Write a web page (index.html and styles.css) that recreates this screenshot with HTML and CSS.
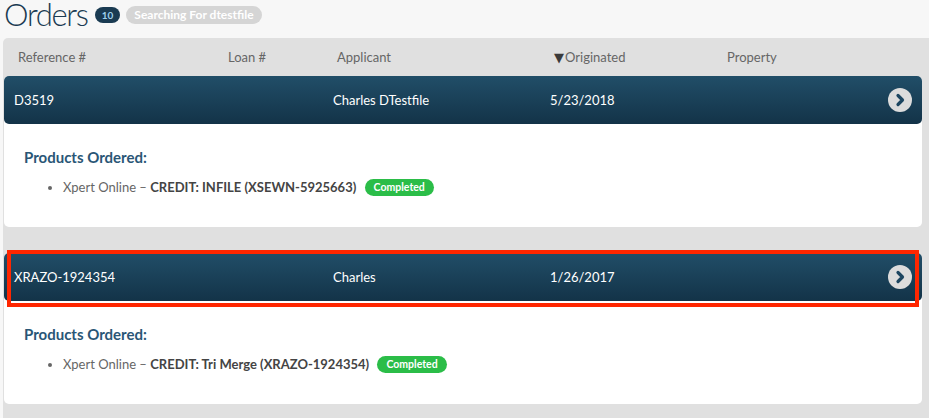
FILE: index.html
```html
<!DOCTYPE html>
<html>
<head>
<meta charset="utf-8">
<link rel="stylesheet" href="styles.css">
</head>
<body>
<div class="page">
  <div class="title-row">
    <h1 class="title">Orders</h1>
    <span class="count">10</span>
    <span class="search-tag">Searching For dtestfile</span>
  </div>
  <div class="table">
    <div class="thead cols">
      <div>Reference #</div>
      <div>Loan #</div>
      <div>Applicant</div>
      <div class="sorted"><span class="tri">&#9660;</span>Originated</div>
      <div>Property</div>
    </div>

    <div class="card">
      <div class="row cols">
        <div>D3519</div>
        <div></div>
        <div>Charles DTestfile</div>
        <div>5/23/2018</div>
        <div class="go-cell"><span class="go"><svg width="24" height="24" viewBox="0 0 24 24"><circle cx="12" cy="12" r="12" fill="#dcdcdc"/><path d="M10 7.5 L14.5 12 L10 16.5" fill="none" stroke="#1c4560" stroke-width="3.2" stroke-linecap="round" stroke-linejoin="round"/></svg></span></div>
      </div>
      <div class="details">
        <h2 class="products">Products Ordered:</h2>
        <ul class="plist">
          <li>Xpert Online – <b>CREDIT: INFILE (XSEWN-5925663)</b> <span class="status">Completed</span></li>
        </ul>
      </div>
    </div>

    <div class="card">
      <div class="row cols">
        <div>XRAZO-1924354</div>
        <div></div>
        <div>Charles</div>
        <div>1/26/2017</div>
        <div class="go-cell"><span class="go"><svg width="24" height="24" viewBox="0 0 24 24"><circle cx="12" cy="12" r="12" fill="#dcdcdc"/><path d="M10 7.5 L14.5 12 L10 16.5" fill="none" stroke="#1c4560" stroke-width="3.2" stroke-linecap="round" stroke-linejoin="round"/></svg></span></div>
        <div class="highlight"></div>
      </div>
      <div class="details">
        <h2 class="products">Products Ordered:</h2>
        <ul class="plist">
          <li>Xpert Online – <b>CREDIT: Tri Merge (XRAZO-1924354)</b> <span class="status">Completed</span></li>
        </ul>
      </div>
    </div>
  </div>
</div>
</body>
</html>
```

FILE: styles.css
```css
html, body {
  margin: 0;
  padding: 0;
  background: #f7f7f7;
  overflow: hidden;
}
body {
  font-family: Lato, "Open Sans", sans-serif;
  font-size: 13px;
  color: #555;
}
.page {
  padding-left: 3px;
}
.title-row {
  display: flex;
  align-items: flex-start;
  height: 38px;
}
.title {
  margin: 0 7px 0 1px;
  font-size: 31px;
  font-weight: 300;
  letter-spacing: -1.3px;
  color: #1a3b52;
  line-height: 29px;
}
.count {
  background: #1a3b52;
  color: #9fd0ec;
  font-weight: 700;
  font-size: 10px;
  border-radius: 9px;
  padding: 0 7px;
  height: 16px;
  line-height: 16px;
  margin-top: 7px;
  margin-right: 6px;
}
.search-tag {
  background: #d5d5d5;
  color: #fff;
  font-weight: 700;
  font-size: 12px;
  border-radius: 9px;
  padding: 0 8px;
  height: 18px;
  line-height: 18px;
  margin-top: 6px;
}
.table {
  background: #e0e0e0;
  border-top-left-radius: 5px;
  padding: 0 7px 15px 1px;
}
.cols {
  display: grid;
  grid-template-columns: 210px 109px 217px 173px 1fr;
  align-items: center;
}
.thead {
  height: 38px;
  padding-left: 14px;
  color: #666;
}
.sorted .tri {
  font-family: "DejaVu Sans", sans-serif;
  font-size: 13px;
  margin-right: 1px;
  color: #3a3a3a;
}
.card {
  background: #fff;
  border-radius: 5px;
  margin-bottom: 26px;
}
.card:last-child {
  margin-bottom: 0;
}
.row {
  position: relative;
  height: 48px;
  padding-left: 10px;
  border-radius: 5px;
  background: linear-gradient(#214e68, #133348);
  color: #fff;
}
.go-cell {
  display: flex;
  justify-content: flex-end;
  padding-right: 10px;
}
.go svg {
  display: block;
}
.highlight {
  position: absolute;
  left: 3px;
  right: 3px;
  top: -3px;
  bottom: -6px;
  border: 4px solid #ff2600;
  pointer-events: none;
}
.details {
  padding: 24px 20px 30px;
}
.products {
  margin: 0;
  font-size: 15px;
  font-weight: 700;
  color: #2a5676;
  line-height: 19px;
}
.plist {
  margin: 10px 0 0;
  padding-left: 39px;
  line-height: 20px;
  color: #666;
}
.plist b {
  color: #444;
}
.status {
  display: inline-block;
  background: #2bbd48;
  color: #fff;
  font-weight: 700;
  font-size: 10.5px;
  border-radius: 9px;
  padding: 0 9px;
  height: 17px;
  line-height: 17px;
  margin-left: 5px;
  vertical-align: 1px;
}
```
